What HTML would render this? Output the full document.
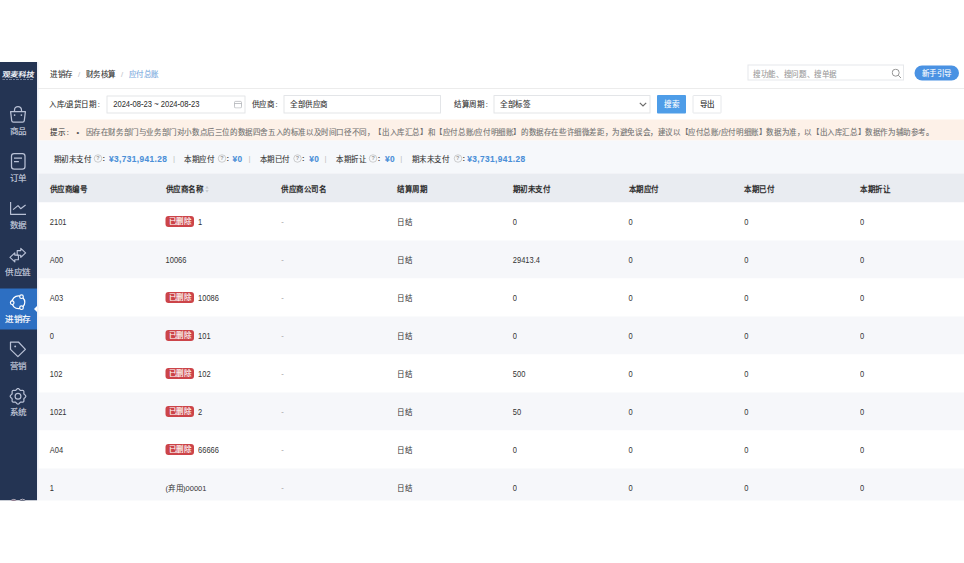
<!DOCTYPE html>
<html lang="zh-CN"><head><meta charset="utf-8">
<style>
*{margin:0;padding:0;box-sizing:border-box}
html,body{width:964px;height:563px;background:#fff;overflow:hidden;font-family:"Liberation Sans",sans-serif;color:#333;text-spacing-trim:space-all}
#app{position:absolute;left:0;top:62px;width:1928px;height:877px;overflow:hidden;background:#fff;transform:scale(0.5);transform-origin:0 0}
#side{position:absolute;left:0;top:0;width:74px;height:100%;background:#243453}
.logo{position:absolute;left:4px;font-size:16px;line-height:16px;font-weight:bold;color:#eef1f7;white-space:nowrap;letter-spacing:-0.3px;transform:skewX(-9deg) scaleY(0.9);transform-origin:0 100%}
.logo2{position:absolute;left:5px;width:62px;height:2px;background:repeating-linear-gradient(90deg,#8f98b2 0 5px,transparent 5px 7px);opacity:0.75}
.item{position:absolute;left:0;width:74px;height:82px}
.ic{position:absolute}
.ic svg{width:100%;height:100%;display:block}
.lb{position:absolute;left:-0.6px;width:74px;text-align:center;font-size:17px;line-height:20px;color:#bcc3d5;white-space:nowrap;font-weight:500;-webkit-text-stroke:0.35px currentColor}
.act{background:#2d6fc2}
.notch{position:absolute;right:0;width:0;height:0;border-top:6px solid transparent;border-bottom:6px solid transparent;border-right:6px solid #fff}
.t{position:absolute;white-space:nowrap;font-size:15px;line-height:20px;color:#333;font-weight:500;-webkit-text-stroke:0.2px currentColor}
.box{position:absolute;background:#fff}
.btn{position:absolute;text-align:center;font-size:15px;font-weight:500;-webkit-text-stroke:0.2px currentColor}
.tag{display:inline-block;background:#cc4449;-webkit-text-stroke:0.25px #fff;color:#fff;border-radius:6px;font-size:15px;line-height:22px;height:22px;padding:0 6px;margin-right:8px;vertical-align:top;font-weight:500}
.q{display:inline-block;width:14px;height:14px;border:1.5px solid #9a9a9a;border-radius:50%;font-size:10px;line-height:11px;text-align:center;color:#9a9a9a;vertical-align:middle;position:relative;top:-2px;font-weight:normal;-webkit-text-stroke:0}
.blue{color:#4a8fd8;font-weight:bold}
.hc{font-weight:bold;color:#2b2b2b;-webkit-text-stroke:0}
</style></head><body>
<div id="app">
<div id="side">
<div class="logo" style="top:16.80px">观麦科技</div><div class="logo2" style="top:34.40px"></div>
<div class="ic" style="left:18.40px;top:87.20px;width:36.00px;height:36.00px"><svg viewBox="0 0 18 18" fill="none" stroke="#b9c1d6" stroke-width="1.25" stroke-linejoin="round"><path d="M5.5 6.2V4.5a3.5 3.5 0 0 1 7 0V6.2"/><path d="M1.6 6.2H16.4L15.3 15.1Q15.1 16.6 13.6 16.6H4.4Q2.9 16.6 2.7 15.1Z"/><circle cx="5.6" cy="9.6" r="0.85" fill="#b9c1d6" stroke="none"/><circle cx="12.4" cy="9.6" r="0.85" fill="#b9c1d6" stroke="none"/></svg></div>
<div class="lb" style="top:128.00px;color:#c3c9da">商品</div>
<div class="ic" style="left:18.40px;top:181.10px;width:36.00px;height:36.00px"><svg viewBox="0 0 18 18" fill="none" stroke="#b9c1d6" stroke-width="1.25"><rect x="2.5" y="1" width="13.5" height="15.6" rx="2.6"/><path d="M5.0 5.7H13.0M5.0 9.2H9.9"/></svg></div>
<div class="lb" style="top:221.90px;color:#c3c9da">订单</div>
<div class="ic" style="left:18.40px;top:275.00px;width:36.00px;height:36.00px"><svg viewBox="0 0 18 18" fill="none" stroke="#b9c1d6" stroke-width="1.2" stroke-linejoin="round"><path d="M1.6 2.5V14.8H17"/><path d="M4.1 10.1L9.0 6.1L11.7 9.2L16.6 5.6"/></svg></div>
<div class="lb" style="top:315.80px;color:#c3c9da">数据</div>
<div class="ic" style="left:18.40px;top:368.90px;width:36.00px;height:36.00px"><svg viewBox="0 0 18 18" fill="none" stroke="#b9c1d6" stroke-width="1.15" stroke-linejoin="round"><path d="M11.8 1.9L16.6 6.4L11.8 10.9V8.7H8.2V4.1H11.8Z"/><path d="M5.8 6.4L1.0 10.9L5.8 15.4V13.2H9.4V8.6H5.8Z"/></svg></div>
<div class="lb" style="top:409.70px;color:#c3c9da">供应链</div>
<div class="act" style="position:absolute;left:0;top:453.20px;width:74px;height:82.00px"></div>
<div class="notch" style="top:487.60px"></div>
<div class="ic" style="left:18.40px;top:462.80px;width:36.00px;height:36.00px"><svg viewBox="0 0 18 18" fill="none" stroke="#ffffff" stroke-width="1.2"><circle cx="9.4" cy="8.8" r="6.4"/><circle cx="12.5" cy="3.2" r="1.8" fill="#2d6fc2"/><circle cx="3.2" cy="9.2" r="1.8" fill="#2d6fc2"/><circle cx="12.5" cy="14.2" r="1.8" fill="#2d6fc2"/></svg></div>
<div class="lb" style="top:503.60px;color:#fff">进销存</div>
<div class="ic" style="left:18.40px;top:556.70px;width:36.00px;height:36.00px"><svg viewBox="0 0 18 18" fill="none" stroke="#b9c1d6" stroke-width="1.25" stroke-linejoin="round"><path d="M1.5 1.5H9.4L16.4 8.9L8.9 16.1L1.5 8.9Z"/><circle cx="6.2" cy="5.9" r="0.95" fill="#b9c1d6" stroke="none"/></svg></div>
<div class="lb" style="top:597.50px;color:#c3c9da">营销</div>
<div class="ic" style="left:18.40px;top:650.60px;width:36.00px;height:36.00px"><svg viewBox="0 0 18 18" fill="none" stroke="#b9c1d6" stroke-width="1.2" stroke-linejoin="round"><path d="M9.00 1.00 L9.50 1.11 L9.97 1.41 L10.39 1.84 L10.75 2.28 L11.09 2.65 L11.45 2.89 L11.87 2.98 L12.37 2.95 L12.94 2.90 L13.54 2.89 L14.08 3.01 L14.52 3.28 L14.79 3.72 L14.91 4.26 L14.90 4.86 L14.85 5.43 L14.82 5.93 L14.91 6.35 L15.15 6.71 L15.52 7.05 L15.96 7.41 L16.39 7.83 L16.69 8.30 L16.80 8.80 L16.69 9.30 L16.39 9.77 L15.96 10.19 L15.52 10.55 L15.15 10.89 L14.91 11.25 L14.82 11.67 L14.85 12.17 L14.90 12.74 L14.91 13.34 L14.79 13.88 L14.52 14.32 L14.08 14.59 L13.54 14.71 L12.94 14.70 L12.37 14.65 L11.87 14.62 L11.45 14.71 L11.09 14.95 L10.75 15.32 L10.39 15.76 L9.97 16.19 L9.50 16.49 L9.00 16.60 L8.50 16.49 L8.03 16.19 L7.61 15.76 L7.25 15.32 L6.91 14.95 L6.55 14.71 L6.13 14.62 L5.63 14.65 L5.06 14.70 L4.46 14.71 L3.92 14.59 L3.48 14.32 L3.21 13.88 L3.09 13.34 L3.10 12.74 L3.15 12.18 L3.18 11.67 L3.09 11.25 L2.85 10.89 L2.48 10.55 L2.04 10.19 L1.61 9.77 L1.31 9.30 L1.20 8.80 L1.31 8.30 L1.61 7.83 L2.04 7.41 L2.48 7.05 L2.85 6.71 L3.09 6.35 L3.18 5.93 L3.15 5.42 L3.10 4.86 L3.09 4.26 L3.21 3.72 L3.48 3.28 L3.92 3.01 L4.46 2.89 L5.06 2.90 L5.62 2.95 L6.13 2.98 L6.55 2.89 L6.91 2.65 L7.25 2.28 L7.61 1.84 L8.03 1.41 L8.50 1.11Z"/><circle cx="9.0" cy="8.8" r="2.9"/></svg></div>
<div class="lb" style="top:691.40px;color:#c3c9da">系统</div>
<svg style="position:absolute;left:18.00px;top:871.60px;width:38.00px;height:16.00px" viewBox="0 0 19 8" fill="none" stroke="#c9c4d0" stroke-width="0.9"><circle cx="4.7" cy="4.6" r="3.2" fill="#5a2a48"/><circle cx="13.5" cy="4.6" r="3.4" fill="#1c2440"/></svg>
</div>
<div class="box" style="left:74.00px;top:0;width:1854.00px;height:53.60px;border-bottom:2px solid #ececec"></div>
<div class="t" style="left:100.00px;top:14.00px;">进销存<span style="color:#c5c8ce;padding:0 11px">/</span>财务核算<span style="color:#c5c8ce;padding:0 11px">/</span><span style="color:#79a9de">应付总账</span></div>
<div class="box" style="left:1494.60px;top:4.60px;width:313.40px;height:32.00px;border:2px solid #e6e8eb"></div>
<div class="t" style="left:1506.00px;top:14.60px;color:#9b9b9b;letter-spacing:0.3px">搜功能、搜问题、搜单据</div>
<svg style="position:absolute;left:1783.00px;top:13.00px;width:20.00px;height:20.00px" viewBox="0 0 10 10" fill="none" stroke="#8a8a8a" stroke-width="0.9"><circle cx="4.2" cy="4.2" r="3.5"/><path d="M6.8 6.8L9.5 9.5"/></svg>
<div class="btn" style="left:1829.20px;top:6.60px;width:88.60px;height:30.00px;border-radius:16px;background:#4a92e3;color:#fff;line-height:32.60px">新手引导</div>
<div class="t" style="left:98.40px;top:74.60px;">入库/退货日期<span style="margin-left:3px">:</span></div>
<div class="box" style="left:213.00px;top:66.60px;width:278.00px;height:36.40px;border:2px solid #e3e5e8;border-radius:1px"></div>
<div class="t" style="left:226.40px;top:74.00px;font-weight:normal;-webkit-text-stroke:0.1px currentColor;font-size:15.2px;color:#333;transform:scaleY(1.12);transform-origin:0 0">2024-08-23 ~ 2024-08-23</div>
<svg style="position:absolute;left:468.00px;top:76.80px;width:16.00px;height:16.00px" viewBox="0 0 8 8" fill="none" stroke="#b0b3b8" stroke-width="0.8"><rect x="0.5" y="0.8" width="7" height="6.7" rx="1.2"/><path d="M0.5 3h7"/></svg>
<div class="t" style="left:503.20px;top:74.60px;">供应商<span style="margin-left:3px">:</span></div>
<div class="box" style="left:566.80px;top:66.40px;width:315.20px;height:36.60px;border:2px solid #e3e5e8;border-radius:1px"></div>
<div class="t" style="left:580.60px;top:75.00px;">全部供应商</div>
<div class="t" style="left:908.40px;top:74.60px;">结算周期<span style="margin-left:3px">:</span></div>
<div class="box" style="left:986.80px;top:66.40px;width:314.20px;height:36.60px;border:2px solid #e3e5e8;border-radius:1px"></div>
<div class="t" style="left:1000.40px;top:75.40px;">全部标签</div>
<svg style="position:absolute;left:1278.00px;top:80.40px;width:16.00px;height:10.00px" viewBox="0 0 8 5" fill="none" stroke="#6a6a6a" stroke-width="1.15"><path d="M0.8 0.8L4 4L7.2 0.8"/></svg>
<div class="btn" style="left:1314.20px;top:66.40px;width:57.80px;height:36.60px;background:#4e9de8;color:#fff;line-height:36.60px;border-radius:2px">搜索</div>
<div class="btn" style="left:1385.00px;top:66.40px;width:58.00px;height:36.60px;background:#fff;border:2px solid #e6e8eb;color:#222;line-height:32.60px;border-radius:2px">导出</div>
<div class="box" style="left:74.00px;top:115.40px;width:1854.00px;height:41.80px;background:#fdf1e8"></div>
<div class="t" style="left:100.60px;top:131.20px;">提示<span style="margin-left:3px">:</span></div>
<div class="t" style="left:153.00px;top:130.00px;color:#555">•</div>
<div class="t" style="left:171.20px;top:131.20px;color:#727272;letter-spacing:0.2px">因存在财务部门与业务部门对小数点后三位的数据四舍五入的标准以及时间口径不同，【出入库汇总】和【应付总账/应付明细账】的数据存在些许细微差距，为避免误会，建议以【应付总账/应付明细账】数据为准，以【出入库汇总】数据作为辅助参考。</div>
<div class="box" style="left:74.00px;top:157.20px;width:1854.00px;height:65.80px;background:#f6f8fb"></div>
<div class="t" style="left:107.20px;top:183.80px;">期初未支付</div>
<div class="box" style="left:188.00px;top:184.80px;width:16.00px;height:16.00px;border:1.7px solid #a3a3a3;border-radius:50%;background:transparent;font-size:11px;line-height:12.5px;text-align:center;color:#9a9a9a;font-weight:bold">?</div>
<div class="t" style="left:205.20px;top:182.80px;font-weight:bold;color:#444">:</div>
<div class="t blue" style="left:218.20px;top:183.80px;font-size:16.6px;letter-spacing:0.8px">¥3,731,941.28</div>
<div class="t" style="left:368.60px;top:183.80px;">本期应付</div>
<div class="box" style="left:436.00px;top:184.80px;width:16.00px;height:16.00px;border:1.7px solid #a3a3a3;border-radius:50%;background:transparent;font-size:11px;line-height:12.5px;text-align:center;color:#9a9a9a;font-weight:bold">?</div>
<div class="t" style="left:453.20px;top:182.80px;font-weight:bold;color:#444">:</div>
<div class="t blue" style="left:465.20px;top:183.80px;font-size:16.6px;letter-spacing:0.8px">¥0</div>
<div class="t" style="left:519.80px;top:183.80px;">本期已付</div>
<div class="box" style="left:587.00px;top:184.80px;width:16.00px;height:16.00px;border:1.7px solid #a3a3a3;border-radius:50%;background:transparent;font-size:11px;line-height:12.5px;text-align:center;color:#9a9a9a;font-weight:bold">?</div>
<div class="t" style="left:604.20px;top:182.80px;font-weight:bold;color:#444">:</div>
<div class="t blue" style="left:618.60px;top:183.80px;font-size:16.6px;letter-spacing:0.8px">¥0</div>
<div class="t" style="left:672.20px;top:183.80px;">本期折让</div>
<div class="box" style="left:738.40px;top:184.80px;width:16.00px;height:16.00px;border:1.7px solid #a3a3a3;border-radius:50%;background:transparent;font-size:11px;line-height:12.5px;text-align:center;color:#9a9a9a;font-weight:bold">?</div>
<div class="t" style="left:755.60px;top:182.80px;font-weight:bold;color:#444">:</div>
<div class="t blue" style="left:770.20px;top:183.80px;font-size:16.6px;letter-spacing:0.8px">¥0</div>
<div class="t" style="left:823.80px;top:183.80px;">期末未支付</div>
<div class="box" style="left:907.60px;top:184.80px;width:16.00px;height:16.00px;border:1.7px solid #a3a3a3;border-radius:50%;background:transparent;font-size:11px;line-height:12.5px;text-align:center;color:#9a9a9a;font-weight:bold">?</div>
<div class="t" style="left:924.80px;top:182.80px;font-weight:bold;color:#444">:</div>
<div class="t blue" style="left:934.40px;top:183.80px;font-size:16.6px;letter-spacing:0.8px">¥3,731,941.28</div>
<div class="t" style="left:345.80px;top:182.00px;color:#c0c0c0;font-weight:normal;-webkit-text-stroke:0;font-size:16px">|</div>
<div class="t" style="left:497.00px;top:182.00px;color:#c0c0c0;font-weight:normal;-webkit-text-stroke:0;font-size:16px">|</div>
<div class="t" style="left:649.00px;top:182.00px;color:#c0c0c0;font-weight:normal;-webkit-text-stroke:0;font-size:16px">|</div>
<div class="t" style="left:800.60px;top:182.00px;color:#c0c0c0;font-weight:normal;-webkit-text-stroke:0;font-size:16px">|</div>
<div class="box" style="left:74.00px;top:223.00px;width:1854.00px;height:58.00px;background:#e9ecf1"></div>
<div class="t hc" style="left:99.60px;top:245.20px;">供应商编号</div>
<div class="t hc" style="left:331.10px;top:245.20px;">供应商名称<svg style="position:absolute;left:78.80px;top:1.80px;width:8.00px;height:15.00px" viewBox="0 0 4 7.5" fill="#c8ccd2"><path d="M2 0.3L3.7 3H0.3z"/><path d="M2 7.2L3.7 4.5H0.3z"/></svg></div>
<div class="t hc" style="left:562.60px;top:245.20px;">供应商公司名</div>
<div class="t hc" style="left:794.10px;top:245.20px;">结算周期</div>
<div class="t hc" style="left:1025.60px;top:245.20px;">期初未支付</div>
<div class="t hc" style="left:1257.10px;top:245.20px;">本期应付</div>
<div class="t hc" style="left:1488.60px;top:245.20px;">本期已付</div>
<div class="t hc" style="left:1720.10px;top:245.20px;">本期折让</div>
<div class="box" style="left:74.00px;top:281.00px;width:1854.00px;height:76.00px;background:#fff"></div>
<div class="t" style="left:99.60px;top:310.00px;font-weight:normal;-webkit-text-stroke:0;font-size:15px;transform:scaleY(1.1);transform-origin:0 0">2101</div>
<div class="tag" style="position:absolute;left:331.10px;top:308.00px">已删除</div>
<div class="t" style="left:396.20px;top:310.00px;font-weight:normal;-webkit-text-stroke:0;font-size:15px;transform:scaleY(1.1);transform-origin:0 0">1</div>
<div class="t" style="left:562.60px;top:310.00px;font-weight:normal;-webkit-text-stroke:0;color:#aaa;font-size:15px;transform:scaleY(1.1);transform-origin:0 0">-</div>
<div class="t" style="left:794.10px;top:310.40px;font-weight:normal;-webkit-text-stroke:0">日结</div>
<div class="t" style="left:1025.60px;top:310.00px;font-weight:normal;-webkit-text-stroke:0;font-size:15px;transform:scaleY(1.1);transform-origin:0 0">0</div>
<div class="t" style="left:1257.10px;top:310.00px;font-weight:normal;-webkit-text-stroke:0;font-size:15px;transform:scaleY(1.1);transform-origin:0 0">0</div>
<div class="t" style="left:1488.60px;top:310.00px;font-weight:normal;-webkit-text-stroke:0;font-size:15px;transform:scaleY(1.1);transform-origin:0 0">0</div>
<div class="t" style="left:1720.10px;top:310.00px;font-weight:normal;-webkit-text-stroke:0;font-size:15px;transform:scaleY(1.1);transform-origin:0 0">0</div>
<div class="box" style="left:74.00px;top:357.00px;width:1854.00px;height:76.00px;background:#f6f7fa"></div>
<div class="t" style="left:99.60px;top:386.00px;font-weight:normal;-webkit-text-stroke:0;font-size:15px;transform:scaleY(1.1);transform-origin:0 0">A00</div>
<div class="t" style="left:331.10px;top:386.00px;font-weight:normal;-webkit-text-stroke:0;font-size:15px;transform:scaleY(1.1);transform-origin:0 0">10066</div>
<div class="t" style="left:562.60px;top:386.00px;font-weight:normal;-webkit-text-stroke:0;color:#aaa;font-size:15px;transform:scaleY(1.1);transform-origin:0 0">-</div>
<div class="t" style="left:794.10px;top:386.40px;font-weight:normal;-webkit-text-stroke:0">日结</div>
<div class="t" style="left:1025.60px;top:386.00px;font-weight:normal;-webkit-text-stroke:0;font-size:15px;transform:scaleY(1.1);transform-origin:0 0">29413.4</div>
<div class="t" style="left:1257.10px;top:386.00px;font-weight:normal;-webkit-text-stroke:0;font-size:15px;transform:scaleY(1.1);transform-origin:0 0">0</div>
<div class="t" style="left:1488.60px;top:386.00px;font-weight:normal;-webkit-text-stroke:0;font-size:15px;transform:scaleY(1.1);transform-origin:0 0">0</div>
<div class="t" style="left:1720.10px;top:386.00px;font-weight:normal;-webkit-text-stroke:0;font-size:15px;transform:scaleY(1.1);transform-origin:0 0">0</div>
<div class="box" style="left:74.00px;top:433.00px;width:1854.00px;height:76.00px;background:#fff"></div>
<div class="t" style="left:99.60px;top:462.00px;font-weight:normal;-webkit-text-stroke:0;font-size:15px;transform:scaleY(1.1);transform-origin:0 0">A03</div>
<div class="tag" style="position:absolute;left:331.10px;top:460.00px">已删除</div>
<div class="t" style="left:396.20px;top:462.00px;font-weight:normal;-webkit-text-stroke:0;font-size:15px;transform:scaleY(1.1);transform-origin:0 0">10086</div>
<div class="t" style="left:562.60px;top:462.00px;font-weight:normal;-webkit-text-stroke:0;color:#aaa;font-size:15px;transform:scaleY(1.1);transform-origin:0 0">-</div>
<div class="t" style="left:794.10px;top:462.40px;font-weight:normal;-webkit-text-stroke:0">日结</div>
<div class="t" style="left:1025.60px;top:462.00px;font-weight:normal;-webkit-text-stroke:0;font-size:15px;transform:scaleY(1.1);transform-origin:0 0">0</div>
<div class="t" style="left:1257.10px;top:462.00px;font-weight:normal;-webkit-text-stroke:0;font-size:15px;transform:scaleY(1.1);transform-origin:0 0">0</div>
<div class="t" style="left:1488.60px;top:462.00px;font-weight:normal;-webkit-text-stroke:0;font-size:15px;transform:scaleY(1.1);transform-origin:0 0">0</div>
<div class="t" style="left:1720.10px;top:462.00px;font-weight:normal;-webkit-text-stroke:0;font-size:15px;transform:scaleY(1.1);transform-origin:0 0">0</div>
<div class="box" style="left:74.00px;top:509.00px;width:1854.00px;height:76.00px;background:#f6f7fa"></div>
<div class="t" style="left:99.60px;top:538.00px;font-weight:normal;-webkit-text-stroke:0;font-size:15px;transform:scaleY(1.1);transform-origin:0 0">0</div>
<div class="tag" style="position:absolute;left:331.10px;top:536.00px">已删除</div>
<div class="t" style="left:396.20px;top:538.00px;font-weight:normal;-webkit-text-stroke:0;font-size:15px;transform:scaleY(1.1);transform-origin:0 0">101</div>
<div class="t" style="left:562.60px;top:538.00px;font-weight:normal;-webkit-text-stroke:0;color:#aaa;font-size:15px;transform:scaleY(1.1);transform-origin:0 0">-</div>
<div class="t" style="left:794.10px;top:538.40px;font-weight:normal;-webkit-text-stroke:0">日结</div>
<div class="t" style="left:1025.60px;top:538.00px;font-weight:normal;-webkit-text-stroke:0;font-size:15px;transform:scaleY(1.1);transform-origin:0 0">0</div>
<div class="t" style="left:1257.10px;top:538.00px;font-weight:normal;-webkit-text-stroke:0;font-size:15px;transform:scaleY(1.1);transform-origin:0 0">0</div>
<div class="t" style="left:1488.60px;top:538.00px;font-weight:normal;-webkit-text-stroke:0;font-size:15px;transform:scaleY(1.1);transform-origin:0 0">0</div>
<div class="t" style="left:1720.10px;top:538.00px;font-weight:normal;-webkit-text-stroke:0;font-size:15px;transform:scaleY(1.1);transform-origin:0 0">0</div>
<div class="box" style="left:74.00px;top:585.00px;width:1854.00px;height:76.00px;background:#fff"></div>
<div class="t" style="left:99.60px;top:614.00px;font-weight:normal;-webkit-text-stroke:0;font-size:15px;transform:scaleY(1.1);transform-origin:0 0">102</div>
<div class="tag" style="position:absolute;left:331.10px;top:612.00px">已删除</div>
<div class="t" style="left:396.20px;top:614.00px;font-weight:normal;-webkit-text-stroke:0;font-size:15px;transform:scaleY(1.1);transform-origin:0 0">102</div>
<div class="t" style="left:562.60px;top:614.00px;font-weight:normal;-webkit-text-stroke:0;color:#aaa;font-size:15px;transform:scaleY(1.1);transform-origin:0 0">-</div>
<div class="t" style="left:794.10px;top:614.40px;font-weight:normal;-webkit-text-stroke:0">日结</div>
<div class="t" style="left:1025.60px;top:614.00px;font-weight:normal;-webkit-text-stroke:0;font-size:15px;transform:scaleY(1.1);transform-origin:0 0">500</div>
<div class="t" style="left:1257.10px;top:614.00px;font-weight:normal;-webkit-text-stroke:0;font-size:15px;transform:scaleY(1.1);transform-origin:0 0">0</div>
<div class="t" style="left:1488.60px;top:614.00px;font-weight:normal;-webkit-text-stroke:0;font-size:15px;transform:scaleY(1.1);transform-origin:0 0">0</div>
<div class="t" style="left:1720.10px;top:614.00px;font-weight:normal;-webkit-text-stroke:0;font-size:15px;transform:scaleY(1.1);transform-origin:0 0">0</div>
<div class="box" style="left:74.00px;top:661.00px;width:1854.00px;height:76.00px;background:#f6f7fa"></div>
<div class="t" style="left:99.60px;top:690.00px;font-weight:normal;-webkit-text-stroke:0;font-size:15px;transform:scaleY(1.1);transform-origin:0 0">1021</div>
<div class="tag" style="position:absolute;left:331.10px;top:688.00px">已删除</div>
<div class="t" style="left:396.20px;top:690.00px;font-weight:normal;-webkit-text-stroke:0;font-size:15px;transform:scaleY(1.1);transform-origin:0 0">2</div>
<div class="t" style="left:562.60px;top:690.00px;font-weight:normal;-webkit-text-stroke:0;color:#aaa;font-size:15px;transform:scaleY(1.1);transform-origin:0 0">-</div>
<div class="t" style="left:794.10px;top:690.40px;font-weight:normal;-webkit-text-stroke:0">日结</div>
<div class="t" style="left:1025.60px;top:690.00px;font-weight:normal;-webkit-text-stroke:0;font-size:15px;transform:scaleY(1.1);transform-origin:0 0">50</div>
<div class="t" style="left:1257.10px;top:690.00px;font-weight:normal;-webkit-text-stroke:0;font-size:15px;transform:scaleY(1.1);transform-origin:0 0">0</div>
<div class="t" style="left:1488.60px;top:690.00px;font-weight:normal;-webkit-text-stroke:0;font-size:15px;transform:scaleY(1.1);transform-origin:0 0">0</div>
<div class="t" style="left:1720.10px;top:690.00px;font-weight:normal;-webkit-text-stroke:0;font-size:15px;transform:scaleY(1.1);transform-origin:0 0">0</div>
<div class="box" style="left:74.00px;top:737.00px;width:1854.00px;height:76.00px;background:#fff"></div>
<div class="t" style="left:99.60px;top:766.00px;font-weight:normal;-webkit-text-stroke:0;font-size:15px;transform:scaleY(1.1);transform-origin:0 0">A04</div>
<div class="tag" style="position:absolute;left:331.10px;top:764.00px">已删除</div>
<div class="t" style="left:396.20px;top:766.00px;font-weight:normal;-webkit-text-stroke:0;font-size:15px;transform:scaleY(1.1);transform-origin:0 0">66666</div>
<div class="t" style="left:562.60px;top:766.00px;font-weight:normal;-webkit-text-stroke:0;color:#aaa;font-size:15px;transform:scaleY(1.1);transform-origin:0 0">-</div>
<div class="t" style="left:794.10px;top:766.40px;font-weight:normal;-webkit-text-stroke:0">日结</div>
<div class="t" style="left:1025.60px;top:766.00px;font-weight:normal;-webkit-text-stroke:0;font-size:15px;transform:scaleY(1.1);transform-origin:0 0">0</div>
<div class="t" style="left:1257.10px;top:766.00px;font-weight:normal;-webkit-text-stroke:0;font-size:15px;transform:scaleY(1.1);transform-origin:0 0">0</div>
<div class="t" style="left:1488.60px;top:766.00px;font-weight:normal;-webkit-text-stroke:0;font-size:15px;transform:scaleY(1.1);transform-origin:0 0">0</div>
<div class="t" style="left:1720.10px;top:766.00px;font-weight:normal;-webkit-text-stroke:0;font-size:15px;transform:scaleY(1.1);transform-origin:0 0">0</div>
<div class="box" style="left:74.00px;top:813.00px;width:1854.00px;height:76.00px;background:#f6f7fa"></div>
<div class="t" style="left:99.60px;top:842.00px;font-weight:normal;-webkit-text-stroke:0;font-size:15px;transform:scaleY(1.1);transform-origin:0 0">1</div>
<div class="t" style="left:331.10px;top:842.40px;font-weight:normal;-webkit-text-stroke:0">(弃用)00001</div>
<div class="t" style="left:562.60px;top:842.00px;font-weight:normal;-webkit-text-stroke:0;color:#aaa;font-size:15px;transform:scaleY(1.1);transform-origin:0 0">-</div>
<div class="t" style="left:794.10px;top:842.40px;font-weight:normal;-webkit-text-stroke:0">日结</div>
<div class="t" style="left:1025.60px;top:842.00px;font-weight:normal;-webkit-text-stroke:0;font-size:15px;transform:scaleY(1.1);transform-origin:0 0">0</div>
<div class="t" style="left:1257.10px;top:842.00px;font-weight:normal;-webkit-text-stroke:0;font-size:15px;transform:scaleY(1.1);transform-origin:0 0">0</div>
<div class="t" style="left:1488.60px;top:842.00px;font-weight:normal;-webkit-text-stroke:0;font-size:15px;transform:scaleY(1.1);transform-origin:0 0">0</div>
<div class="t" style="left:1720.10px;top:842.00px;font-weight:normal;-webkit-text-stroke:0;font-size:15px;transform:scaleY(1.1);transform-origin:0 0">0</div>
<div class="box" style="left:74.00px;top:0;width:2.60px;height:877px;background:#eef0f8"></div>
</div>
</body></html>
